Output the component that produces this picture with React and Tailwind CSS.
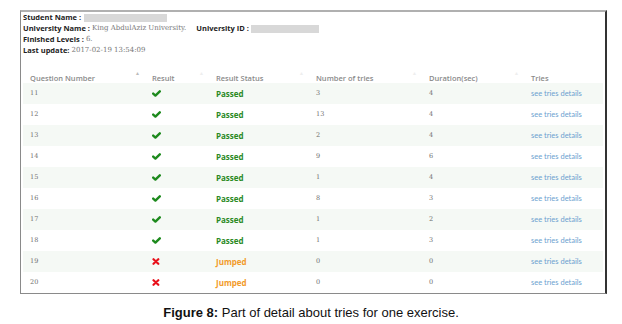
import React from 'react';

const rows = [
  { q: 11, ok: true, tries: 3, dur: 4 },
  { q: 12, ok: true, tries: 13, dur: 4 },
  { q: 13, ok: true, tries: 2, dur: 4 },
  { q: 14, ok: true, tries: 9, dur: 6 },
  { q: 15, ok: true, tries: 1, dur: 4 },
  { q: 16, ok: true, tries: 8, dur: 3 },
  { q: 17, ok: true, tries: 1, dur: 2 },
  { q: 18, ok: true, tries: 1, dur: 3 },
  { q: 19, ok: false, tries: 0, dur: 0 },
  { q: 20, ok: false, tries: 0, dur: 0 },
];

const headers = [
  { label: 'Question Number', w: 'w-[122px]', sort: true, up: true },
  { label: 'Result', w: 'w-[64px]', sort: true },
  { label: 'Result Status', w: 'w-[100px]', sort: true },
  { label: 'Number of tries', w: 'w-[113px]', sort: true },
  { label: 'Duration(sec)', w: 'w-[102px]', sort: true },
  { label: 'Tries', w: 'flex-1', sort: false },
];

const Check = () => (
  <svg width="9" height="7" viewBox="0 0 9 7">
    <path d="M1.2 3.6 L3.4 5.6 L7.8 1.3" stroke="#1d8a1d" strokeWidth="2.4" fill="none" strokeLinecap="round" strokeLinejoin="round" />
  </svg>
);

const Cross = () => (
  <svg width="8" height="7" viewBox="0 0 8 7">
    <path d="M1.5 1.2 L6.3 5.8 M6.3 1.2 L1.5 5.8" stroke="#e8101a" strokeWidth="2.2" strokeLinecap="round" />
  </svg>
);

export default function App() {
  const serif = { fontFamily: '"DejaVu Serif", serif' };
  const sans = { fontFamily: '"Open Sans", sans-serif' };

  return (
    <div className="w-[622px] h-[324px] bg-white overflow-hidden">
      <div className="ml-[20px] mt-[10px] w-[587px] h-[284px] border-t-2 border-t-[#b0b0b0] border-l border-l-[#8a8a8a] border-b border-b-[#8a8a8a] border-r-2 border-r-[#333]">
        {/* info block */}
        <div className="pl-[2px] text-[7.5px] leading-[11px] text-[#222]" style={sans}>
          <div className="flex items-center h-[11px]">
            <span className="font-bold">Student Name :</span>
            <span className="ml-[3px] w-[83px] h-[8px] bg-[#d8d8d8]" />
          </div>
          <div className="flex items-center h-[11px]">
            <span className="font-bold">University Name :</span>
            <span className="ml-[2px] text-[#777] text-[7px]" style={serif}>King AbdulAziz University.</span>
            <span className="ml-[10px] font-bold">University ID :</span>
            <span className="ml-[2px] w-[68px] h-[8px] bg-[#d8d8d8]" />
          </div>
          <div className="flex items-center h-[11px]">
            <span className="font-bold">Finished Levels :</span>
            <span className="ml-[2px] text-[#777] text-[7px]" style={serif}>6.</span>
          </div>
          <div className="flex items-center h-[11px]">
            <span className="font-bold">Last update:</span>
            <span className="ml-[2px] text-[#777] text-[7px]" style={serif}>2017-02-19 13:54:09</span>
          </div>
        </div>

        {/* table */}
        <div className="mx-[2px]">
          <div className="flex h-[27px] items-end text-[7.5px] text-[#8a8a8a] font-semibold" style={sans}>
            {headers.map((h) => (
              <div key={h.label} className={`${h.w} h-[9px] pl-[7px] pr-[5px] flex justify-between items-start leading-[8px]`}>
                <span>{h.label}</span>
                {h.sort && (
                  <span className={`text-[5px] leading-none -mt-[3px] ${h.up ? 'text-[#bbb]' : 'text-[#eee]'}`}>▲</span>
                )}
              </div>
            ))}
          </div>
          {rows.map((r, i) => (
            <div
              key={r.q}
              className={`flex h-[21px] items-center ${i % 2 === 0 ? 'bg-[#f5f9f5]' : 'bg-white'}`}
            >
              <div className="w-[122px] pl-[7px] text-[6.5px] text-[#6f6f6f]" style={serif}>{r.q}</div>
              <div className="w-[64px] pl-[7px] flex items-center">{r.ok ? <Check /> : <Cross />}</div>
              <div
                className={`w-[100px] pl-[7px] text-[8px] font-bold ${r.ok ? 'text-[#2b8a1f]' : 'text-[#f29b2a]'}`}
                style={sans}
              >
                {r.ok ? 'Passed' : 'Jumped'}
              </div>
              <div className="w-[113px] pl-[7px] text-[6.5px] text-[#6f6f6f]" style={serif}>{r.tries}</div>
              <div className="w-[102px] pl-[7px] text-[6.5px] text-[#6f6f6f]" style={serif}>{r.dur}</div>
              <div className="flex-1 pl-[7px] text-[7.5px] text-[#6c9fcf]" style={{ fontFamily: 'Lato, sans-serif' }}>
                see tries details
              </div>
            </div>
          ))}
        </div>
      </div>

      <div className="mt-[9px] text-center text-[13px] text-[#111]" style={{ fontFamily: '"Liberation Sans", Arial, sans-serif' }}>
        <span className="font-bold">Figure 8:</span> Part of detail about tries for one exercise.
      </div>
    </div>
  );
}
